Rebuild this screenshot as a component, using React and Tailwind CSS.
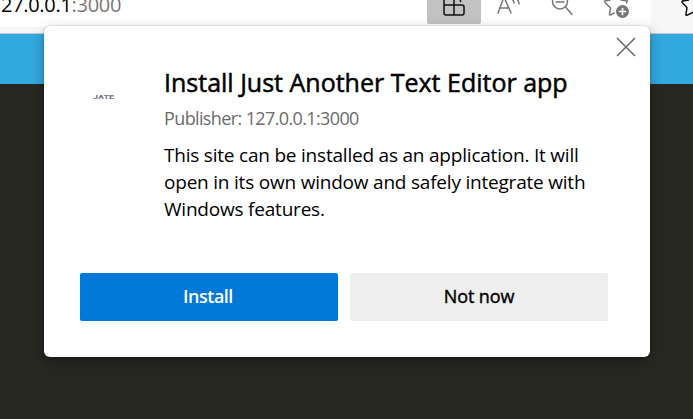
export default function App() {
  return (
    <div className="relative h-[419px] w-[693px] overflow-hidden bg-[#272822] font-['Open_Sans','Noto_Sans',sans-serif]">
      <header className="flex h-[34px] justify-between border-b border-[#c9c9c9] bg-[#f7f7f7]">
        <div className="flex h-[27px] w-[651px] items-start justify-between rounded-br-md bg-white">
          <span className="-mt-[9px] ml-px whitespace-nowrap text-[20px] leading-[27px] tracking-[-0.3px] text-[#767676]">
            <span className="text-black">27.0.0.1</span>:3000
          </span>
          <svg width="225" height="27" viewBox="426 0 225 27" fill="none" strokeLinecap="round" strokeLinejoin="round">
            <path d="M427 0h54v22a2 2 0 0 1-2 2h-50a2 2 0 0 1-2-2z" fill="#c2c2c2" />
            <path d="M444 -2v15a2 2 0 0 0 2 2h16a2 2 0 0 0 2-2v-6a2 2 0 0 0-2-2h-18M454 -2v17M460.500 0v1.500" stroke="#111" strokeWidth="1.500" />
            <path d="M498 13l6-16 7 16M500.500 8h8.500M512 -1q2 2 2 4M516 -2q3 3 3 6" stroke="#767676" strokeWidth="1.500" />
            <circle cx="560" cy="1.500" r="7.500" stroke="#767676" strokeWidth="1.500" />
            <path d="M556 2h8M565.500 7l6.500 7.500" stroke="#767676" strokeWidth="1.500" />
            <path d="M605 2.500l5 5q.6.600.4 1.500l-.9 5q-.2 1.500 1.200.9l3.500-1.900M604.500 1l5.500-1M621 0l6.500 1-1 2" stroke="#767676" strokeWidth="1.500" />
            <circle cx="622.500" cy="11.500" r="6.500" fill="#767676" />
            <path d="M622.500 8.500v6M619.500 11.500h6" stroke="white" strokeWidth="1.700" />
          </svg>
        </div>
        <svg width="12" height="27" viewBox="681 0 12 27" fill="none">
          <path d="M689 0l-6.500 1q-1 .6-.3 1.500l4.300 4.500q.5.600.4 1.300l-1 6q0 1.500 1.300.9l6-3" stroke="#111" strokeWidth="1.500" strokeLinejoin="round" />
        </svg>
      </header>
      <div className="h-[50px] bg-[#32a9e1]" />
      <section className="absolute left-[44px] top-[26px] h-[331px] w-[606px] rounded-[6px] bg-white px-9 shadow-[0_0_2px_rgba(0,0,0,0.25),0_5px_14px_rgba(0,0,0,0.3)]">
        <button aria-label="Close" className="absolute right-[14px] top-[11px]">
          <svg width="20" height="20" viewBox="0 0 20 20" fill="none" stroke="#666" strokeWidth="1.500"><path d="M1 1l18 18M19 1L1 19" /></svg>
        </button>
        <div className="flex h-[247px] pt-[38px]">
          <div className="w-[84px] pl-[13px] pt-[27px]">
            <svg width="23" height="12" viewBox="0 0 23 12">
              <text x="0" y="8" fontSize="6" fontWeight="700" fontFamily="Roboto, sans-serif" fill="#73737f" textLength="21" lengthAdjust="spacingAndGlyphs">JATE</text>
            </svg>
          </div>
          <div className="whitespace-nowrap text-black">
            <h1 className="text-[25px] leading-[36px] [-webkit-text-stroke:0.5px_black]">Install Just Another Text Editor app</h1>
            <p className="mt-px text-[18px] leading-[34px] tracking-[-0.62px] text-[#6b6b6b]">Publisher: 127.0.0.1:3000</p>
            <p className="mt-[7px] text-[19px] leading-[27px] tracking-[-0.21px]">
              This site can be installed as an application. It will<br />open in its own window and safely integrate with<br />Windows features.
            </p>
          </div>
        </div>
        <div className="flex gap-3">
          <button className="h-12 w-[258px] rounded-[2px] bg-[#0078d7] pb-0.5 pr-0.5 text-[18px] font-semibold tracking-[-0.5px] text-white">Install</button>
          <button className="h-12 w-[258px] rounded-[2px] bg-[#eee] pb-0.5 text-[18px] tracking-[-0.1px] text-black [-webkit-text-stroke:0.4px_black]">Not now</button>
        </div>
      </section>
    </div>
  );
}
